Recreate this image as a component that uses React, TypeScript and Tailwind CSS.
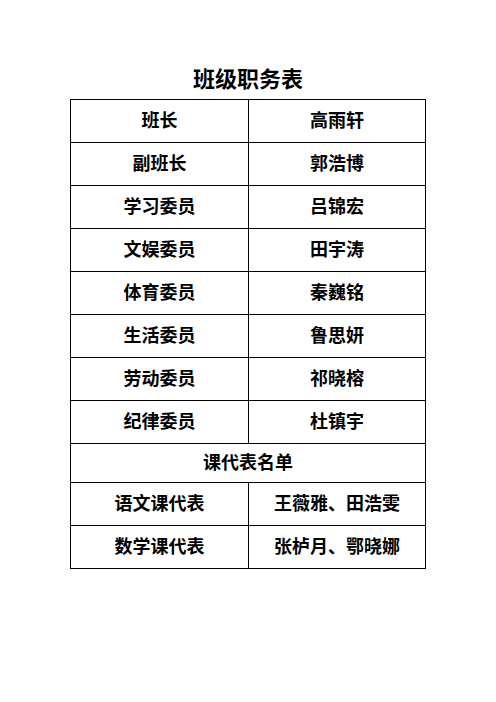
const duties = [
  ['班长', '高雨轩'],
  ['副班长', '郭浩博'],
  ['学习委员', '吕锦宏'],
  ['文娱委员', '田宇涛'],
  ['体育委员', '秦巍铭'],
  ['生活委员', '鲁思妍'],
  ['劳动委员', '祁晓榕'],
  ['纪律委员', '杜镇宇'],
]

const reps = [
  ['语文课代表', '王薇雅、田浩雯'],
  ['数学课代表', '张栌月、鄂晓娜'],
]

function Cell({ children }: { children: React.ReactNode }) {
  return (
    <div className="h-[43px] flex items-center justify-center border-r border-b border-black">
      {children}
    </div>
  )
}

export default function App() {
  return (
    <div
      className="w-[496px] h-[702px] bg-white text-black"
      style={{ fontFamily: '"Liberation Serif", "Noto Sans CJK SC", serif' }}
    >
      <div className="pt-[64px] h-[96px] text-center text-[22px] leading-[32px] font-bold">
        班级职务表
      </div>
      <div className="mt-[3px] mx-auto w-[356px] border-l border-t border-black text-[18px] font-bold">
        <div className="grid grid-cols-[178px_177px]">
          {duties.map(([role, name]) => (
            <div key={role} className="contents">
              <Cell>{role}</Cell>
              <Cell>{name}</Cell>
            </div>
          ))}
        </div>
        <div className="h-[39px] flex items-center justify-center border-r border-b border-black">
          课代表名单
        </div>
        <div className="grid grid-cols-[178px_177px]">
          {reps.map(([role, names]) => (
            <div key={role} className="contents">
              <Cell>{role}</Cell>
              <Cell>{names}</Cell>
            </div>
          ))}
        </div>
      </div>
    </div>
  )
}
